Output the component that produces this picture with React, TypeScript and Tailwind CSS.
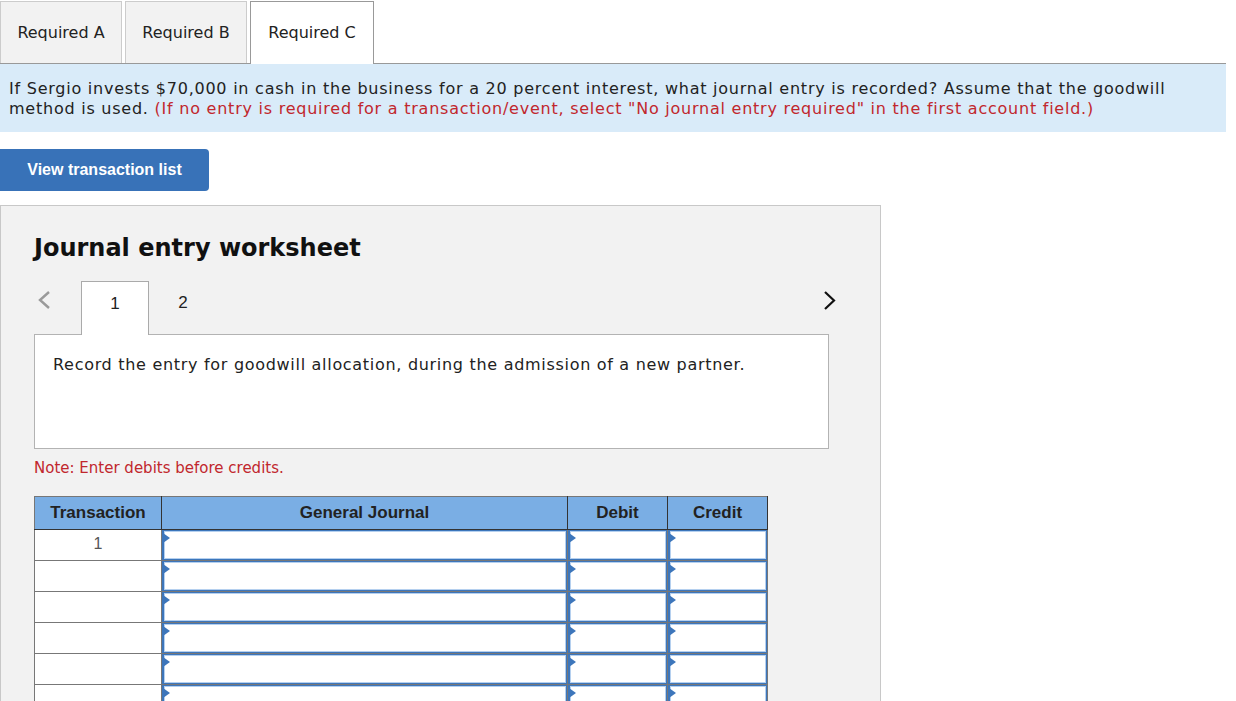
const verdana = { fontFamily: '"DejaVu Sans", Verdana, sans-serif' }
const arial = { fontFamily: '"Liberation Sans", Arial, sans-serif' }

function InputCell() {
  return (
    <td className="p-0 border border-[#777] bg-white">
      <div className="relative h-[30px] border border-l-2 border-[#3d76bb] bg-white shadow-[inset_0_0_0_1px_#b5d0ef]">
        <svg className="absolute left-[-1px] top-[2px]" width="7" height="10" viewBox="0 0 7 10">
          <polygon points="0,0 7,5 0,10" fill="#3d76bb" />
        </svg>
      </div>
    </td>
  )
}

export default function App() {
  const tabs = ['Required A', 'Required B', 'Required C']
  const rows = [1, 2, 3, 4, 5, 6, 7]

  return (
    <div className="w-[1236px] bg-white text-[#222]">
      {/* Requirement tabs */}
      <div className="flex items-end gap-[3px] pt-[1px] w-[1226px] border-b border-[#999] h-[64px]" style={verdana}>
        {tabs.map((t, i) => {
          const active = i === 2
          return (
            <div
              key={t}
              className={
                active
                  ? 'w-[124px] h-[63px] -mb-px flex items-center justify-center bg-white border border-[#999] border-b-0 text-[16px] text-[#222]'
                  : 'w-[122px] h-[62px] flex items-center justify-center bg-[#f2f2f2] border border-[#ccc] border-b-0 text-[16px] text-[#222]'
              }
            >
              {t}
            </div>
          )
        })}
      </div>

      {/* Question */}
      <div className="w-[1226px] bg-[#d9ebf9] pl-[9px] pr-4 pt-[15px] pb-[13px] text-[16px] leading-[20px] tracking-[0.76px] text-[#222]" style={verdana}>
        If Sergio invests $70,000 in cash in the business for a 20 percent interest, what journal entry is recorded? Assume that the goodwill method is used.{' '}
        <span className="text-[#c1272d]">
          (If no entry is required for a transaction/event, select "No journal entry required" in the first account field.)
        </span>
      </div>

      <button className="mt-[17px] w-[209px] h-[42px] rounded-r-[4px] bg-[#3872b8] text-white font-bold text-[16px]" style={arial}>
        View transaction list
      </button>

      {/* Worksheet */}
      <div className="mt-[14px] w-[881px] bg-[#f2f2f2] border border-[#c8c8c8] pl-[33px] pr-[52px] pt-[27px] pb-10">
        <h2 className="text-[24px] font-bold leading-[30px] text-[#111]" style={verdana}>
          Journal entry worksheet
        </h2>

        <div className="mt-[18px] flex items-end h-[53px] mr-[-15px]">
          <div className="w-[47px] h-full flex items-start pt-[10px] pl-[3px]">
            <svg width="14" height="18" viewBox="0 0 14 18">
              <polyline points="12,1 3,9 12,17" fill="none" stroke="#9a9a9a" strokeWidth="2.4" />
            </svg>
          </div>
          <div className="w-[68px] h-[54px] -mb-px relative z-10 bg-white border border-[#aaa] border-b-0 flex items-start pt-[9px] justify-center text-[17px] text-[#222]" style={arial}>
            1
          </div>
          <div className="w-[68px] h-full flex items-start pt-[9px] justify-center text-[17px] text-[#222]" style={arial}>
            2
          </div>
          <div className="flex-1" />
          <div className="w-[20px] h-full flex items-start pt-[10px]">
            <svg width="14" height="19" viewBox="0 0 14 19">
              <polyline points="2,1 11,9.5 2,18" fill="none" stroke="#111" strokeWidth="2.2" />
            </svg>
          </div>
        </div>

        <div className="w-[795px] h-[115px] bg-white border border-[#b3b3b3] pl-[18px] pt-[19px] text-[16px] leading-[22px] tracking-[0.7px] text-[#222]" style={verdana}>
          Record the entry for goodwill allocation, during the admission of a new partner.
        </div>

        <p className="mt-[9px] text-[15px] leading-[20px] text-[#c1272d]" style={verdana}>
          Note: Enter debits before credits.
        </p>

        <table className="mt-[18px] border-collapse table-fixed w-[734px]" style={arial}>
          <colgroup>
            <col className="w-[127px]" />
            <col className="w-[406px]" />
            <col className="w-[100px]" />
            <col className="w-[100px]" />
          </colgroup>
          <thead>
            <tr className="h-[33px] bg-[#7aaee4] text-[17px] font-bold text-[#222]">
              <th className="border border-[#333] border-t-[#777] border-l-[#777] font-bold">Transaction</th>
              <th className="border border-[#333] border-t-[#777] font-bold">General Journal</th>
              <th className="border border-[#333] border-t-[#777] font-bold">Debit</th>
              <th className="border border-[#333] border-t-[#777] font-bold">Credit</th>
            </tr>
          </thead>
          <tbody>
            {rows.map((r) => (
              <tr key={r} className="h-[31px]">
                <td className="border border-[#777] bg-white text-center align-top pt-[2px] text-[16px] text-[#555]">
                  {r === 1 ? '1' : ''}
                </td>
                <InputCell />
                <InputCell />
                <InputCell />
              </tr>
            ))}
          </tbody>
        </table>
      </div>
    </div>
  )
}
